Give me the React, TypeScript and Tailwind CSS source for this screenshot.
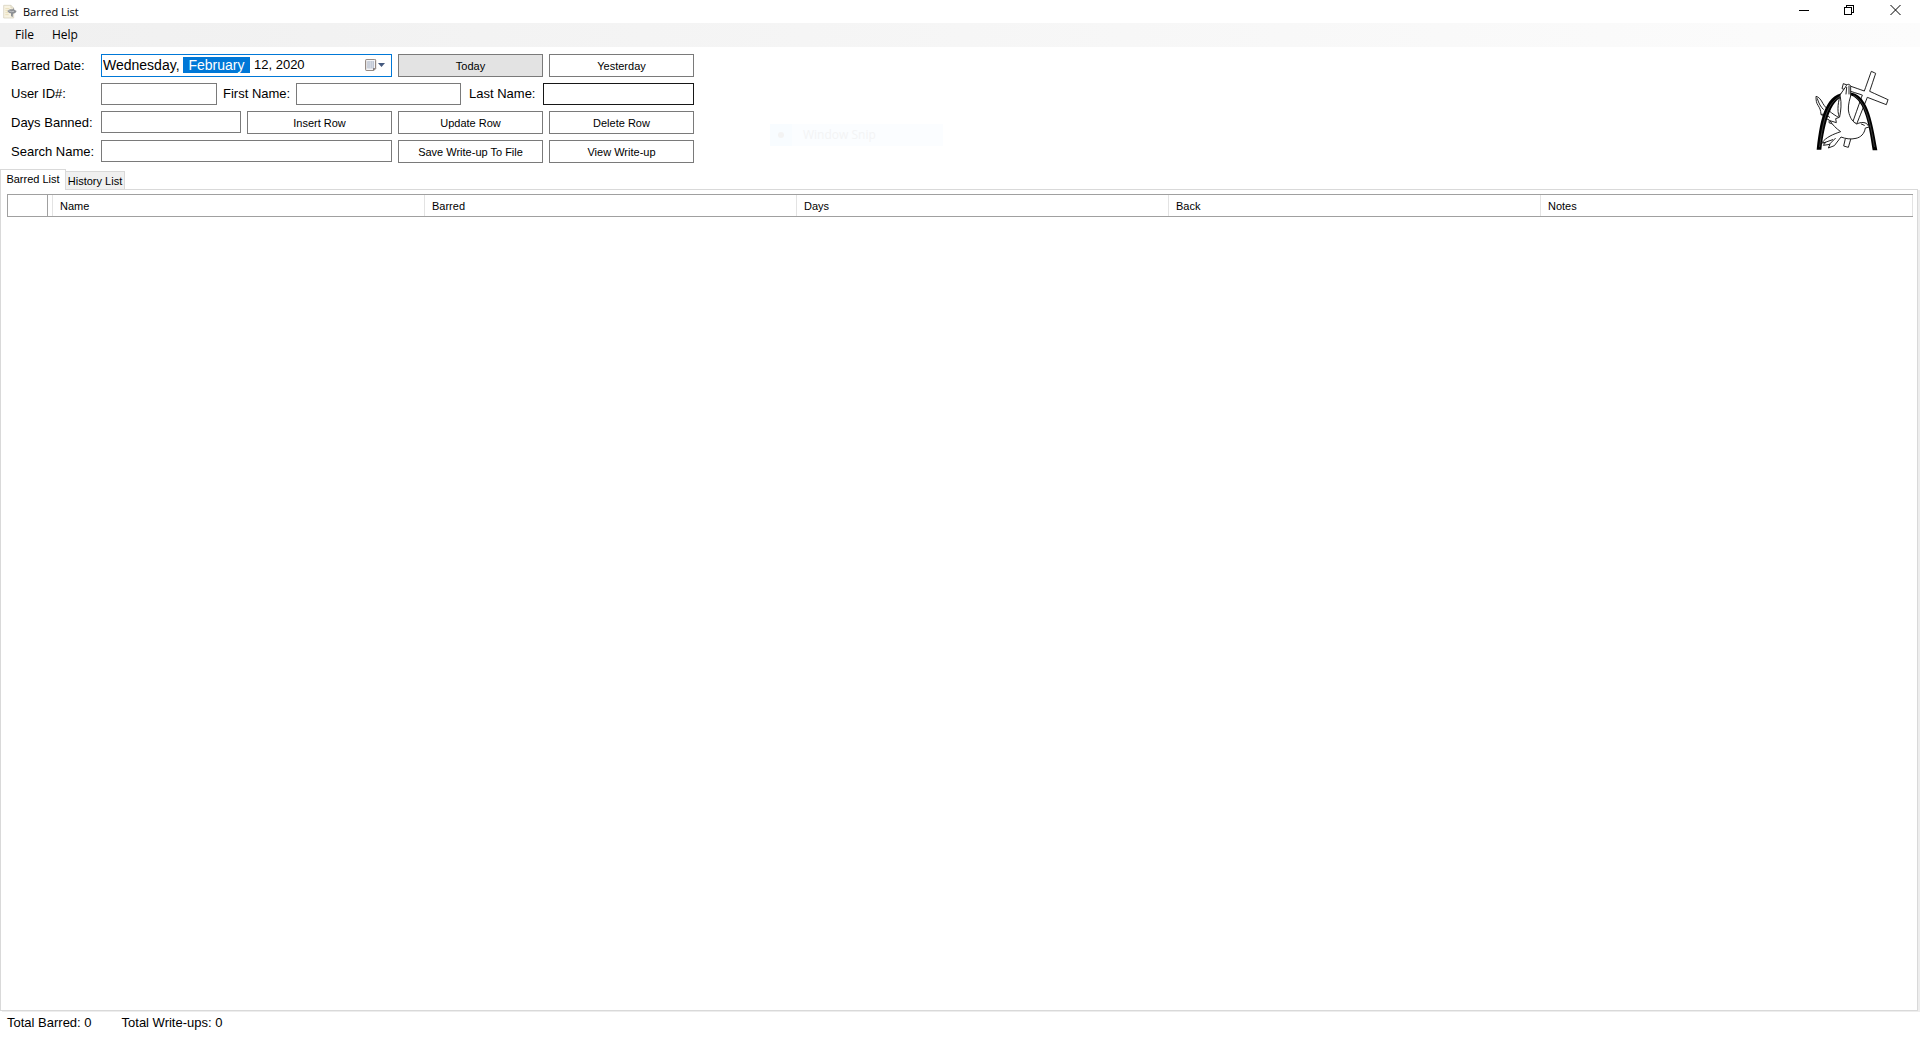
import React, { useState } from "react";

const columns = ["Name", "Barred", "Days", "Back", "Notes"];

function AppIcon() {
  return (
    <svg width="14" height="16" viewBox="0 0 42 48" fill="none" aria-hidden="true">
      <path d="M2 4h22l8 8v30H2z" fill="#f8f3e2" stroke="#d2cbb8" strokeWidth="2" />
      <path d="M24 4v8h8" stroke="#d2cbb8" strokeWidth="2" />
      <path d="M7 14h12M7 20h7M7 26h9M7 32h10" stroke="#e3d5a6" strokeWidth="2" />
      <path d="M13 21c3-4 9-6 16-5l2-4 3 5 7 4-4 6-7 2-1 11-5-4v-8c-4 0-8-2-11-7z" fill="#8d9094" />
      <path d="M16 20l9 3 8-1" stroke="#d5d7d9" strokeWidth="2" />
    </svg>
  );
}

function CalendarIcon() {
  return (
    <svg width="20" height="12" viewBox="0 0 60 36" aria-hidden="true">
      <path d="M2 4a3 3 0 0 1 3-3h24a3 3 0 0 1 3 3v25l-6 6H5a3 3 0 0 1-3-3z" fill="#f5f5f7" stroke="#83766f" strokeWidth="3" />
      <path d="M7 7h20v21H7z" fill="#a9b4c6" />
      <path d="M7 12h20M7 18h20M7 24h20M12 7v21M17 7v21M22 7v21" stroke="#f5f5f7" strokeWidth="1.5" />
      <path d="M24 34v-6h8z" fill="#6b625f" />
      <path d="M39 12h21l-10.500 12z" fill="#44597f" />
    </svg>
  );
}

function Logo() {
  return (
    <svg
      className="mt-[3px] h-[118px] w-[140px] shrink-0"
      viewBox="0 0 420 354"
      fill="none"
      stroke="#222"
      strokeWidth="3"
      strokeLinecap="round"
      strokeLinejoin="round"
      role="img"
      aria-label="Dove, arch and cross"
    >
      {/* cross */}
      <path
        d="M274 64l13 6-18 54 55 25-5 15-57-22-32 80-11-8 28-79-61-19 4-15 63 22z"
        strokeDasharray="9 2"
      />
      <path d="M196 266l-5 22 14 4 7-24" strokeDasharray="9 2" />
      {/* left wing */}
      <path
        d="M177 203c-22-12-38-26-48-42-6-12-12-20-21-22 0 12 1 20 6 27 5 8 8 13 9 27 8 9 16 14 25 17l-1 8 24 9z"
        fill="#fff"
      />
      <path d="M112 146c5 16 10 24 18 32M124 193c10-2 18 2 25 9" />
      {/* arch */}
      <path
        d="M110 299C122 195 138 129 204 127C262 129 275 205 292 301L278 301C266 215 250 139 205 135C153 138 135 215 124 299Z"
        fill="#000"
        stroke="none"
      />
      <path d="M119 290C129 210 142 151 190 135M283 290C270 212 256 154 222 137" stroke="#bbb" strokeWidth="1" />
      {/* body and tail */}
      <path
        d="M197 110c3-9 13-10 15 0v28c-7 22-9 40-5 52 5 17 12 26 23 32 8-4 20-7 29-2l9 11-12 3c-3 18-14 28-28 31-16 4-32 1-45-4l-20 26-18 7 5-11-20 3 7-9-12 2c14-18 34-26 57-34-14-10-24-20-32-33l19 6-2-12 11-4c-8-22-3-48 3-68z"
        fill="#fff"
      />
      <path d="M181 140c4 20 2 42-2 60M200 112l-2 20M207 108v24M148 283l18-18M130 279l28-10M244 222l9 4" />
    </svg>
  );
}

function FormButton({ children, active = false }: { children: React.ReactNode; active?: boolean }) {
  return (
    <button
      type="button"
      className={`h-[23px] w-[145px] shrink-0 border border-[#7a7a7a] text-[11px] leading-4 ${active ? "bg-[#e3e3e3]" : "bg-white"}`}
    >
      {children}
    </button>
  );
}

function TextBox({ id, className }: { id: string; className: string }) {
  return <input id={id} type="text" className={`h-[22px] shrink-0 border bg-white px-1 outline-none ${className}`} />;
}

export default function App() {
  const [tab, setTab] = useState("barred");

  return (
    <div className="flex h-screen flex-col bg-white font-['Liberation_Sans',Arial,sans-serif] text-[13px] leading-4 text-black">
      <header className="flex h-[23px] shrink-0 items-center justify-between pl-[3px] font-['Open_Sans',sans-serif]">
        <div className="flex items-center gap-1.5">
          <AppIcon />
          <h1 className="text-[11px]">Barred List</h1>
        </div>
        <div className="flex h-[23px] items-start pr-px">
          <button type="button" aria-label="Minimize" className="flex h-5 w-[45px] items-center justify-center">
            <svg width="10" height="10" shapeRendering="crispEdges">
              <path d="M0 5.500h10" stroke="#000" />
            </svg>
          </button>
          <button type="button" aria-label="Restore" className="flex h-5 w-[45px] items-center justify-center">
            <svg width="10" height="10" fill="none" stroke="#000" shapeRendering="crispEdges">
              <path d="M.5 2.500h7v7h-7zM2.500 2.500v-2h7v7h-2" />
            </svg>
          </button>
          <button type="button" aria-label="Close" className="flex h-5 w-[48px] items-center justify-center">
            <svg width="11" height="10" stroke="#000">
              <path d="M.5 0l10 10M10.500 0l-10 10" />
            </svg>
          </button>
        </div>
      </header>

      <nav className="flex h-6 shrink-0 items-center gap-[18px] bg-linear-to-r from-[#f0f0f0] to-[#fcfcfc] pl-[15px] font-['Open_Sans',sans-serif] text-[12px]">
        <button type="button">File</button>
        <button type="button">Help</button>
      </nav>

      <section className="relative flex h-[122px] shrink-0 justify-between">
        <form className="flex flex-col gap-1.5 pt-[7px] pl-[11px]">
          <div className="flex gap-1.5">
            <div className="flex items-center">
              <label htmlFor="month" className="w-[90px]">Barred Date:</label>
              <div className="flex h-[23px] w-[291px] items-center border border-[#0078d7] pb-px pl-px text-[14px]">
                <input aria-label="Weekday" readOnly defaultValue="Wednesday," className="h-4 w-[80px] outline-none" />
                <input
                  id="month"
                  readOnly
                  defaultValue="February"
                  className="h-4 w-[67px] bg-[#0078d7] text-center text-white outline-none"
                />
                <input aria-label="Day and year" readOnly defaultValue="12, 2020" className="ml-1 h-4 w-[80px] text-[13px] outline-none" />
                <button type="button" aria-label="Open calendar" className="mr-1.5 ml-auto">
                  <CalendarIcon />
                </button>
              </div>
            </div>
            <FormButton active>Today</FormButton>
            <FormButton>Yesterday</FormButton>
          </div>
          <div className="flex items-center">
            <label htmlFor="user-id" className="w-[90px]">User ID#:</label>
            <TextBox id="user-id" className="w-[116px] border-[#7a7a7a]" />
            <label htmlFor="first-name" className="ml-1.5 w-[73px]">First Name:</label>
            <TextBox id="first-name" className="w-[165px] border-[#7a7a7a]" />
            <label htmlFor="last-name" className="ml-2 w-[74px]">Last Name:</label>
            <TextBox id="last-name" className="w-[151px] border-[#171717]" />
          </div>
          <div className="flex gap-1.5">
            <div className="flex">
              <label htmlFor="days" className="w-[90px] self-center">Days Banned:</label>
              <TextBox id="days" className="w-[140px] border-[#7a7a7a]" />
            </div>
            <FormButton>Insert Row</FormButton>
            <FormButton>Update Row</FormButton>
            <FormButton>Delete Row</FormButton>
          </div>
          <div className="flex gap-1.5">
            <div className="flex">
              <label htmlFor="search" className="w-[90px] self-center">Search Name:</label>
              <TextBox id="search" className="w-[291px] border-[#7a7a7a]" />
            </div>
            <FormButton>Save Write-up To File</FormButton>
            <FormButton>View Write-up</FormButton>
          </div>
        </form>
        <Logo />

        {/* menu item fading out */}
        <div className="absolute top-[77px] left-[770px] flex h-[22px] w-[173px] items-center bg-[#fbfdff] font-['Open_Sans',sans-serif] text-[12px] text-[#f3f4f5]">
          <span className="flex h-full w-[22px] items-center justify-center bg-[#f8fcff]">
            <span className="size-1.5 rounded-full bg-[#f3f3f3]" />
          </span>
          <span className="ml-[11px]">Window Snip</span>
        </div>
      </section>

      <div role="tablist" className="flex h-5 shrink-0 items-end text-[11px]">
        <button
          type="button"
          role="tab"
          aria-selected={tab === "barred"}
          onClick={() => setTab("barred")}
          className="z-10 -mb-px h-[21px] w-[66px] border-x border-t border-[#d9d9d9] bg-white pb-0.5"
        >
          Barred List
        </button>
        <button
          type="button"
          role="tab"
          aria-selected={tab === "history"}
          onClick={() => setTab("history")}
          className="h-[18px] w-[59px] border-t border-r border-[#d9d9d9] bg-[#f0f0f0]"
        >
          History List
        </button>
      </div>

      <main className="mr-0.5 mb-px min-h-0 flex-1 border border-[#d9d9d9] pt-1 pr-1 pl-1.5 shadow-[2px_1px_0_#ededed]">
        <table className="w-full table-fixed border-separate border-spacing-0 border-y border-[#a0a0a0] text-left text-[11px]">
          <thead>
            <tr className="h-[21px]">
              <td className="w-[41px] border-x border-[#a0a0a0] p-0" />
              <td className="w-[5px] border-r border-[#e3e3e3] p-0" />
              {columns.map((column) => (
                <th key={column} scope="col" className="border-r border-[#e3e3e3] py-0 pr-0 pl-[7px] font-normal">
                  {column}
                </th>
              ))}
            </tr>
          </thead>
          <tbody />
        </table>
      </main>

      <footer className="flex h-7 shrink-0 items-center gap-[30px] pb-1.5 pl-[7px]">
        <span>Total Barred: 0</span>
        <span>Total Write-ups: 0</span>
      </footer>
    </div>
  );
}
